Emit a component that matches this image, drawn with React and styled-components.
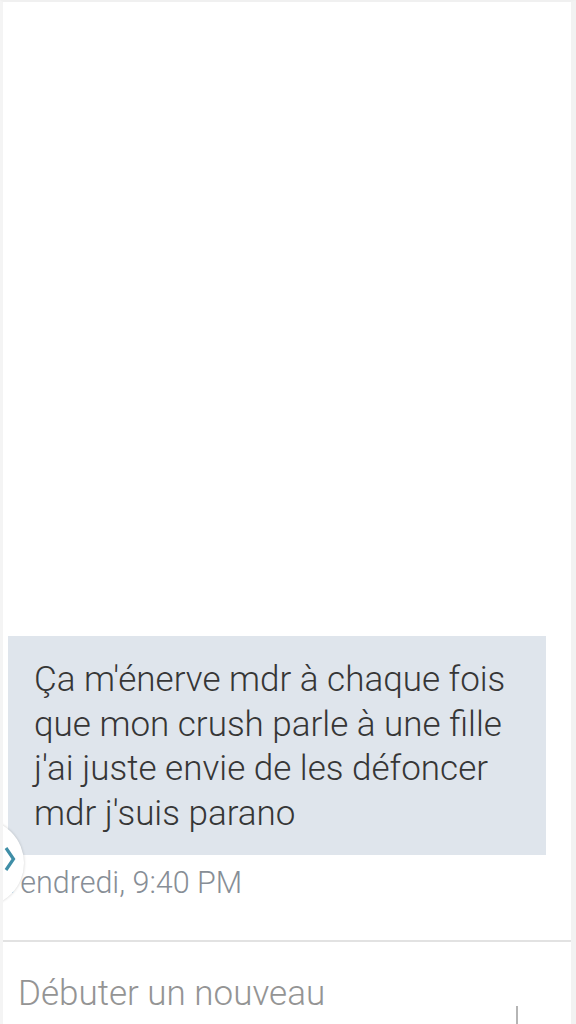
import React from 'react';
import styled, { createGlobalStyle } from 'styled-components';

const GlobalStyle = createGlobalStyle`
	html, body {
		margin: 0;
		padding: 0;
		background: #fff;
		font-family: Roboto, "Noto Sans", sans-serif;
	}
`;

const Screen = styled.div`
	width: 576px;
	height: 1024px;
	box-sizing: border-box;
	border-top: 2px solid #f0f0f0;
	border-left: 3px solid #f4f4f4;
	border-right: 5px solid #f2f2f2;
	display: flex;
	flex-direction: column;
	justify-content: flex-end;
	overflow: hidden;
	position: relative;
`;

const Thread = styled.div`
	display: flex;
	flex-direction: column;
	padding: 0 0 0 5px;
`;

const Bubble = styled.div`
	width: 538px;
	box-sizing: border-box;
	background: #dfe5ec;
	color: #363636;
	font-size: 35px;
	font-weight: 300;
	line-height: 44.5px;
	padding: 22px 10px 19px 26px;
	white-space: nowrap;
`;

const Stamp = styled.div`
	position: relative;
	height: 85px;
	padding: 10px 0 0 0;
	text-indent: -6px;
	box-sizing: border-box;
	font-size: 30.5px;
	font-weight: 300;
	color: #878e96;
`;

// round pull tab over the left edge
const Handle = styled.div`
	position: absolute;
	left: -72px;
	top: -36px;
	width: 88px;
	height: 88px;
	border-radius: 50%;
	background: #fff;
	box-shadow: 0 0 3px rgba(0, 0, 0, 0.2);
	display: flex;
	align-items: center;
	justify-content: flex-end;
	padding-right: 8px;
	padding-bottom: 8px;
	box-sizing: border-box;
	text-indent: 0;
`;

const Composer = styled.div`
	height: 84px;
	border-top: 2px solid #e2e2e2;
	position: relative;
	padding: 31px 0 0 15px;
	box-sizing: border-box;
	font-size: 35px;
	font-weight: 300;
	color: #949494;
`;

const Caret = styled.div`
	position: absolute;
	left: 513px;
	top: 64px;
	width: 2px;
	height: 24px;
	background: #b5b5b5;
`;

export default function App() {
	return (
		<Screen>
			<GlobalStyle />
			<Thread>
				<Bubble>
					Ça m'énerve mdr à chaque fois<br />
					que mon crush parle à une fille<br />
					j'ai juste envie de les défoncer<br />
					mdr j'suis parano
				</Bubble>
				<Stamp>
					Vendredi, 9:40 PM
					<Handle>
						<svg width="12" height="26" viewBox="0 0 12 26">
							<path d="M2 2 L9.5 13 L2 24" fill="none" stroke="#3f8ea7" strokeWidth="3.2" />
						</svg>
					</Handle>
				</Stamp>
			</Thread>
			<Composer>
				Débuter un nouveau
				<Caret />
			</Composer>
		</Screen>
	);
}
